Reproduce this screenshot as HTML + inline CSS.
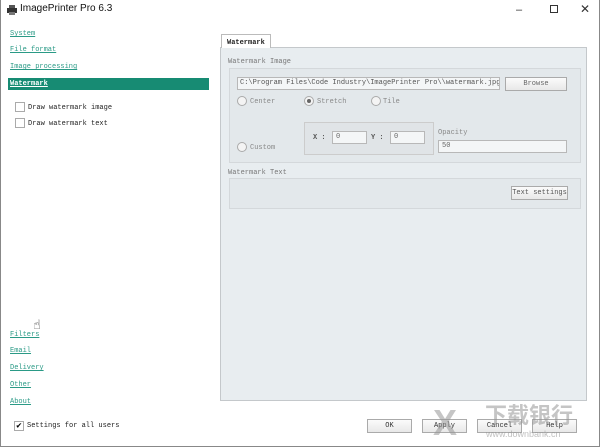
<!DOCTYPE html><html><head><style>
*{margin:0;padding:0;box-sizing:border-box}
body{width:600px;height:447px;background:#fff;position:relative;overflow:hidden;font-family:"Liberation Mono",monospace;font-size:7px;color:#333;white-space:nowrap}
.a{position:absolute}
.l{position:absolute;left:10px;color:#2a9a86;text-decoration:underline;font-size:7px}
.cb{position:absolute;width:10px;height:10px;border:1px solid #aaa;background:#fff}
.rb{position:absolute;width:10px;height:10px;border:1px solid #aaa;border-radius:50%;background:#f4f4f4}
.btn{position:absolute;height:14px;border:1px solid #aaa;background:linear-gradient(#fbfbfb,#e8e8e8);text-align:center;line-height:12px;font-size:7px}
.in{position:absolute;height:13px;border:1px solid #b8b8b8;background:#f4f6f7;line-height:11px;padding-left:3px;color:#666;overflow:hidden}
.g{color:#888}
</style></head><body>
<div class="a" style="left:0;top:0;width:600px;height:447px;border:1px solid #888;border-top:none"></div>
<svg class="a" style="left:6px;top:4px" width="12" height="12"><rect x="1" y="4" width="10" height="5" fill="#333"/><rect x="3" y="1" width="6" height="3" fill="#555"/><rect x="3" y="8" width="6" height="3" fill="#777"/></svg>
<div class="a" style="left:20px;top:3px;font-family:'Liberation Sans',sans-serif;font-size:10px;color:#111">ImagePrinter Pro 6.3</div>
<div class="a" style="left:516px;top:4px;font-family:'Liberation Sans';font-size:11px;color:#333">–</div>
<div class="a" style="left:550px;top:5px;width:8px;height:8px;border:1px solid #333"></div>
<div class="a" style="left:580px;top:2px;font-family:'Liberation Sans';font-size:12px;color:#333">✕</div>
<div class="l" style="top:30px">System</div>
<div class="l" style="top:46px">File format</div>
<div class="l" style="top:63px">Image processing</div>
<div class="a" style="left:8px;top:78px;width:201px;height:12px;background:#178b73;color:#fff;text-decoration:underline;font-weight:bold;padding-left:2px;line-height:12px">Watermark</div>
<div class="cb" style="left:15px;top:102px"></div><div class="a" style="left:28px;top:104px;color:#222">Draw watermark image</div>
<div class="cb" style="left:15px;top:118px"></div><div class="a" style="left:28px;top:120px;color:#222">Draw watermark text</div>
<div class="l" style="top:331px">Filters</div>
<div class="l" style="top:347px">Email</div>
<div class="l" style="top:364px">Delivery</div>
<div class="l" style="top:381px">Other</div>
<div class="l" style="top:398px">About</div>
<div class="a" style="left:33px;top:318px;font-size:13px;font-family:'DejaVu Sans'">☝</div>
<div class="cb" style="left:14px;top:421px;font-size:9px;line-height:8px;text-align:center;color:#000">✔</div>
<div class="a" style="left:27px;top:422px;color:#222">Settings for all users</div>
<div class="a" style="left:221px;top:34px;width:50px;height:14px;background:#fff;border:1px solid #bbb;border-bottom:none;font-weight:bold;padding:4px 0 0 5px;z-index:2;color:#222">Watermark</div>
<div class="a" style="left:220px;top:47px;width:367px;height:354px;background:#e8edf0;border:1px solid #c4c8cb"></div>
<div class="a" style="left:228px;top:58px;color:#777">Watermark Image</div>
<div class="a" style="left:229px;top:68px;width:352px;height:95px;border:1px solid #d4d8db;background:#e3e8eb"></div>
<div class="in" style="left:237px;top:77px;width:263px;color:#555;padding-left:2px">C:\Program Files\Code Industry\ImagePrinter Pro\\watermark.jpg</div>
<div class="btn" style="left:505px;top:77px;width:62px;color:#666">Browse</div>
<div class="rb" style="left:237px;top:96px"></div><div class="a g" style="left:250px;top:98px">Center</div>
<div class="rb" style="left:304px;top:96px"></div><div class="a" style="left:307px;top:99px;width:4px;height:4px;border-radius:50%;background:#666"></div><div class="a g" style="left:317px;top:98px">Stretch</div>
<div class="rb" style="left:371px;top:96px"></div><div class="a g" style="left:383px;top:98px">Tile</div>
<div class="a" style="left:304px;top:122px;width:130px;height:33px;border:1px solid #ccc;background:#e0e4e7"></div>
<div class="a" style="left:313px;top:134px;font-weight:bold;color:#555">X :</div>
<div class="in" style="left:332px;top:131px;width:35px">0</div>
<div class="a" style="left:371px;top:134px;font-weight:bold;color:#555">Y :</div>
<div class="in" style="left:390px;top:131px;width:35px">0</div>
<div class="a g" style="left:438px;top:129px">Opacity</div>
<div class="in" style="left:438px;top:140px;width:129px">50</div>
<div class="rb" style="left:237px;top:142px"></div><div class="a g" style="left:250px;top:144px">Custom</div>
<div class="a" style="left:228px;top:169px;color:#777">Watermark Text</div>
<div class="a" style="left:229px;top:178px;width:352px;height:31px;border:1px solid #d4d8db;background:#e3e8eb"></div>
<div class="btn" style="left:511px;top:186px;width:57px;color:#555">Text settings</div>
<div class="btn" style="left:367px;top:419px;width:45px">OK</div>
<div class="btn" style="left:422px;top:419px;width:45px">Apply</div>
<div class="btn" style="left:477px;top:419px;width:45px">Cancel</div>
<div class="btn" style="left:532px;top:419px;width:45px">Help</div>
<div class="a" style="left:433px;top:402px;font-size:36px;color:rgba(150,150,150,.55);font-family:'Liberation Sans';font-weight:bold">X</div>
<div class="a" style="left:485px;top:401px;font-size:22px;color:rgba(150,150,150,.55);font-family:'Noto Sans CJK SC',sans-serif;font-weight:bold;line-height:26px">下载银行</div>
<div class="a" style="left:486px;top:429px;font-size:9px;color:rgba(150,150,150,.6);font-family:'Liberation Sans'">www.downbank.cn</div>
</body></html>
